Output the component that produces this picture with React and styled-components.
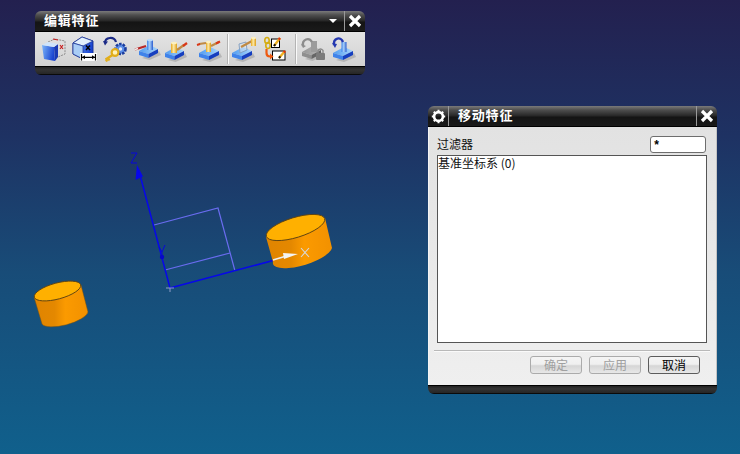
import React from "react";
import styled, { createGlobalStyle } from "styled-components";

const Global = createGlobalStyle`
  html, body { margin: 0; padding: 0; width: 740px; height: 454px; overflow: hidden; }
  body { font-family: "Noto Sans CJK SC", "Liberation Sans", sans-serif; }
`;

const Viewport = styled.div`
  position: relative;
  width: 740px;
  height: 454px;
  overflow: hidden;
  background: linear-gradient(180deg, #23204f 0%, #1e3263 30%, #184c78 60%, #10608c 100%);
`;

const Scene = styled.svg`
  position: absolute;
  inset: 0;
`;

const Window = styled.section`
  position: absolute;
  left: ${(p) => p.$x}px;
  top: ${(p) => p.$y}px;
  width: ${(p) => p.$w}px;
  height: ${(p) => p.$h}px;
  display: flex;
  flex-direction: column;
  border-radius: 6px;
  overflow: hidden;
`;

const TitleBar = styled.header`
  flex: 0 0 20px;
  height: 20px;
  display: flex;
  align-items: stretch;
  background: linear-gradient(180deg, #7a7a7a 0%, #4e4e4e 20%, #262626 50%, #141414 55%, #1a1a1a 100%);
  border-bottom: 1px solid #000;
  box-sizing: content-box;
  color: #fff;
`;

const TitleText = styled.h1`
  flex: 1;
  margin: 0;
  font-size: 13px;
  font-weight: 700;
  line-height: 18px;
  letter-spacing: 0.8px;
  padding-left: ${(p) => p.$pad}px;
  white-space: nowrap;
`;

const Menu = styled.span`
  width: 0;
  height: 0;
  align-self: center;
  margin-right: 7px;
  border-left: 4px solid transparent;
  border-right: 4px solid transparent;
  border-top: 4px solid #fff;
`;

const TitleCell = styled.span`
  flex: 0 0 ${(p) => p.$w}px;
  display: flex;
  align-items: center;
  justify-content: center;
  border-left: ${(p) => (p.$left ? "1px solid #9a9a9a" : "none")};
  border-right: ${(p) => (p.$right ? "1px solid #9a9a9a" : "none")};
`;

const FootBar = styled.footer`
  flex: 1;
  background: linear-gradient(180deg, #222 0%, #333 40%, #262626 100%);
  border-top: 1px solid #000;
  border-bottom: 1px solid #0a0a0a;
`;

const ToolRow = styled.div`
  flex: 0 0 34px;
  box-sizing: border-box;
  display: flex;
  align-items: center;
  gap: 7px;
  padding: 0 0 1px 6px;
  background: linear-gradient(180deg, #e4e4e4, #d2d2d2);
`;

const ToolIcon = styled.svg`
  flex: 0 0 24px;
  width: 24px;
  height: 26px;
  overflow: visible;
`;

const ToolSep = styled.i`
  flex: 0 0 2px;
  height: 30px;
  margin-right: -3px;
  background: linear-gradient(90deg, #b4b4b4 50%, #fafafa 50%);
`;

const DialogBody = styled.div`
  flex: 0 0 258px;
  box-sizing: border-box;
  display: flex;
  flex-direction: column;
  padding: 9px 9px 0 8px;
  background: linear-gradient(180deg, #e2e2e2, #efefef);
  border-left: 1px solid #f4f4f4;
  border-right: 1px solid #c4c4c4;
`;

const FilterRow = styled.div`
  display: flex;
  align-items: center;
  justify-content: space-between;
  height: 16px;
`;

const Label = styled.label`
  font-size: 12px;
  line-height: 14px;
  color: #111;
`;

const FilterInput = styled.input`
  box-sizing: border-box;
  width: 56px;
  height: 17px;
  margin-right: 1px;
  padding: 3px 2px 0;
  border: 1px solid #6e6e6e;
  border-radius: 3px;
  background: #fff;
  font: 700 12px "Liberation Mono", monospace;
  color: #000;
  outline: none;
`;

const ListBox = styled.div`
  box-sizing: border-box;
  height: 188px;
  margin-top: 3px;
  border: 1px solid #555;
  background: #fff;
  font-size: 12px;
  line-height: 13px;
  color: #111;
`;

const Rule = styled.hr`
  margin: 7px -3px 0 -3px;
  border: 0;
  height: 1px;
  background: #b9b9b9;
  box-shadow: 0 1px 0 #fafafa;
`;

const Buttons = styled.div`
  display: flex;
  justify-content: flex-end;
  gap: 7px;
  margin-top: 5px;
  padding-right: 7px;
`;

const Button = styled.button`
  box-sizing: border-box;
  width: 52px;
  height: 18px;
  padding: 0;
  border: 1px solid ${(p) => (p.disabled ? "#ababab" : "#5c5c5c")};
  border-radius: 3px;
  background: linear-gradient(180deg, #f4f4f4 0%, #f0f0f0 45%, #d6d6d6 55%, #e8e8e8 100%);
  font: 12px/16px "Noto Sans CJK SC", sans-serif;
  color: ${(p) => (p.disabled ? "#a0a0a0" : "#000")};
`;

const Close = () => (
  <svg width="14" height="14" viewBox="0 0 14 14">
    <path d="M2 2 12 12M12 2 2 12" stroke="#fff" strokeWidth="3.2" />
  </svg>
);

const Gear = () => (
  <svg width="15" height="15" viewBox="0 0 15 15">
    <circle cx="7.5" cy="7.5" r="4.4" fill="none" stroke="#fff" strokeWidth="2.6" />
    <path d="M7.5 0.8V3M7.5 12V14.2M0.8 7.5H3M12 7.5H14.2M2.8 2.8 4.3 4.3M10.7 10.7 12.2 12.2M12.2 2.8 10.7 4.3M4.3 10.7 2.8 12.2" stroke="#fff" strokeWidth="2" />
  </svg>
);

/* blue (or disabled grey) base block shared by the feature icons */
const Slab = ({ x = 0, y = 14, w = 19, grey }) => {
  const m = x + w * 0.5;
  const r = x + w;
  return (
    <g>
      <path d={`M${x + 3} ${y + 11} L${m + 1} ${y + 13} L${r + 3} ${y + 8} L${r + 1} ${y + 4}Z`} fill="#9a9a9a" opacity="0.55" />
      <path d={`M${x} ${y + 4} L${m + 1} ${y - 2} L${r} ${y + 2} L${m} ${y + 7}Z`} fill={grey ? "url(#greyTop)" : "url(#slabTop)"} />
      <path d={`M${x} ${y + 4} L${m} ${y + 7} V${y + 11} L${x} ${y + 8}Z`} fill={grey ? "#8e8e8e" : "#3f83ea"} />
      <path d={`M${m} ${y + 7} L${r} ${y + 2} V${y + 6} L${m} ${y + 11}Z`} fill={grey ? "#666" : "#163fc0"} />
    </g>
  );
};

const Cyl = ({ x, y, h = 8, w = 6 }) => (
  <g>
    <rect x={x} y={y} width={w} height={h} fill="url(#gold)" />
    <ellipse cx={x + w / 2} cy={y} rx={w / 2} ry="1.3" fill="#fdf0c0" />
  </g>
);

const Pencil = ({ x1, y1, x2, y2 }) => (
  <g>
    <path d={`M${x1} ${y1} L${x2} ${y2}`} stroke="#f0b020" strokeWidth="2.4" />
    <path d={`M${x1} ${y1} L${x1 + (x2 - x1) * 0.22} ${y1 + (y2 - y1) * 0.22}`} stroke="#111" strokeWidth="2" />
    <path d={`M${x2} ${y2} L${x2 - (x2 - x1) * 0.2} ${y2 - (y2 - y1) * 0.2}`} stroke="#e03010" strokeWidth="2.4" />
  </g>
);

const Icons = [
  <>
    <path d="M7 6 14 3 24 5 24 18 17 21" fill="none" stroke="#8d8d8d" strokeWidth="1" strokeDasharray="2 1" />
    <path d="M12 3 17 4M19 9 22 13M22 9 19 13" stroke="#c82020" strokeWidth="1.2" fill="none" />
    <path d="M1 9 13 11 14 25 3 23Z" fill="url(#cube)" />
    <path d="M13 11 17 8 17 21 14 25Z" fill="#1a3ab4" />
    <path d="M1 9 7 6 17 8 13 11Z" fill="#cfe4fb" />
  </>,
  <>
    <path d="M1 7 10 1 21 5 21 17 11 23 1 18Z" fill="url(#cube)" stroke="#142c90" strokeWidth="0.9" />
    <path d="M1 7 10 1 21 5 11 10Z" fill="#e2f0fc" stroke="#142c90" strokeWidth="0.7" />
    <path d="M1 7 11 10 11 23 1 18Z" fill="#a9cdf6" stroke="#142c90" strokeWidth="0.7" />
    <path d="M14 9.5 18 14M18 9.5 14 14" stroke="#000" strokeWidth="1.5" />
    <rect x="8" y="17" width="17" height="8" fill="#fff" />
    <path d="M9.5 18V24.5M23.5 18V24.5M10 21.3H23" stroke="#000" strokeWidth="1.2" />
    <path d="M10 21.3 13 19.3V23.3ZM23 21.3 20 19.3V23.3Z" fill="#000" />
  </>,
  <>
    <circle cx="17.5" cy="13" r="5" fill="#5b8ee6" stroke="#1d3e9e" strokeWidth="2.6" strokeDasharray="2.4 1.2" />
    <circle cx="17.5" cy="13" r="1.7" fill="#e4ecfa" />
    <path d="M2 7C2 1 11 0 13 6" fill="none" stroke="#1b2a86" strokeWidth="2.2" />
    <path d="M2 9.5 0 5 5 5.5Z" fill="#1b2a86" />
    <circle cx="12" cy="16.5" r="3.4" fill="#fff2b8" stroke="#e2ae1a" strokeWidth="2.2" />
    <path d="M9.5 19 2.5 23.5M5 22 6.5 24.5M3 23.5 4.2 25.5" stroke="#e2ae1a" strokeWidth="2.4" fill="none" />
  </>,
  <>
    <Slab x={5} y={11} w={19} />
    <rect x="13" y="4" width="6" height="10" fill="url(#pillar)" />
    <ellipse cx="16" cy="4" rx="3" ry="1.2" fill="#bcdcfb" />
    <path d="M1 13.5 12 10" stroke="#b82828" strokeWidth="2.2" />
    <path d="M1 13.5 4 12.5" stroke="#f4f4f4" strokeWidth="1.6" />
  </>,
  <>
    <Slab x={0} y={13} w={19} />
    <Cyl x={6} y={7} h={10} />
    <path d="M12 14 19 9" stroke="#c08a44" strokeWidth="2.2" />
    <path d="M18 10 22 7" stroke="#d83818" strokeWidth="2.2" />
  </>,
  <>
    <Slab x={3} y={13} w={20} />
    <Cyl x={10} y={6} h={10} w={5} />
    <path d="M3 8 10 7M15 10 23 6" stroke="#c08a44" strokeWidth="2.2" />
    <path d="M1 9 4 8M20 7.5 24 5.5" stroke="#d83818" strokeWidth="2" />
  </>,
  <>
    <Slab x={-1} y={13} w={20} />
    <path d="M6 8 13 6 14 14 7 17Z" fill="#dde8f2" fillOpacity="0.5" stroke="#7f9cc0" strokeWidth="0.9" />
    <path d="M8 11 19 5" stroke="#c08a44" strokeWidth="2.2" />
    <Cyl x={18} y={2} h={8} w={5} />
  </>,
  <>
    <rect x="7.5" y="3" width="8" height="8.5" fill="#fff" stroke="#000" />
    <rect x="8.5" y="15" width="12.5" height="9" fill="#fff" stroke="#000" />
    <Pencil x1={10} y1={10} x2={16} y2={2} />
    <Pencil x1={15} y1={22} x2={21} y2={15} />
    <ellipse cx="3" cy="4.5" rx="2.2" ry="3" fill="none" stroke="#d4ac10" strokeWidth="1.6" />
    <ellipse cx="4" cy="9.5" rx="2.2" ry="3" fill="none" stroke="#d4ac10" strokeWidth="1.6" />
    <path d="M2.5 13V17Q2.5 20.5 6 20.5H7" fill="none" stroke="#ee5a10" strokeWidth="2.2" />
    <path d="M6 17.5 9.5 20.5 6 23.5Z" fill="#ee5a10" />
  </>,
  <>
    <Slab x={1} y={12} w={19} grey />
    <rect x="10" y="5" width="6" height="11" fill="#9c9c9c" />
    <path d="M2 10C1 3 8 1 11 6" fill="none" stroke="#8c8c8c" strokeWidth="2.4" />
    <path d="M0 8 5 10 2 12Z" fill="#8c8c8c" />
    <rect x="15" y="17" width="9" height="7" rx="1" fill="#7b7b7b" />
    <path d="M17 17V14.5Q19.5 11.5 22 14.5V17" fill="none" stroke="#8a8a8a" strokeWidth="1.4" />
  </>,
  <>
    <Slab x={1} y={13} w={20} />
    <rect x="9.5" y="6" width="5" height="10" fill="url(#pillar)" />
    <path d="M2 9C1 2 9 0 11 6" fill="none" stroke="#2438b0" strokeWidth="2.4" />
    <path d="M0 7 5 8 3 12Z" fill="#2438b0" />
  </>,
];

const App = () => {
  const first = Icons.slice(0, 6);
  return (
    <Viewport>
      <Global />
      <Scene width="740" height="454" viewBox="0 0 740 454">
        <defs>
          <linearGradient id="side" x1="0" x2="1" y1="0" y2="0">
            <stop offset="0" stopColor="#e08400" />
            <stop offset="0.38" stopColor="#e48800" />
            <stop offset="0.58" stopColor="#fb9a00" />
            <stop offset="1" stopColor="#f29100" />
          </linearGradient>
          <linearGradient id="cube" x1="0" x2="1" y1="0" y2="0.3">
            <stop offset="0" stopColor="#7ab4fa" />
            <stop offset="1" stopColor="#1a44d0" />
          </linearGradient>
          <linearGradient id="slabTop" x1="0" x2="1" y1="0" y2="0">
            <stop offset="0" stopColor="#4e9af0" />
            <stop offset="1" stopColor="#a8d6fc" />
          </linearGradient>
          <linearGradient id="greyTop" x1="0" x2="1" y1="0" y2="0">
            <stop offset="0" stopColor="#959595" />
            <stop offset="1" stopColor="#b8b8b8" />
          </linearGradient>
          <linearGradient id="gold" x1="0" x2="1" y1="0" y2="0">
            <stop offset="0" stopColor="#e6a820" />
            <stop offset="0.45" stopColor="#fdeaa8" />
            <stop offset="1" stopColor="#dc9c18" />
          </linearGradient>
          <linearGradient id="pillar" x1="0" x2="1" y1="0" y2="0">
            <stop offset="0" stopColor="#3f83ea" />
            <stop offset="0.45" stopColor="#a8d0f8" />
            <stop offset="1" stopColor="#2a5cd0" />
          </linearGradient>
        </defs>
        <g fill="none">
          <path d="M154 225 218 208 235 271M165 270 230 253" stroke="#6a6cf0" strokeWidth="1.2" />
          <path d="M170 288 140 175" stroke="#0707ea" strokeWidth="1.5" />
          <path d="M170 288 275 260" stroke="#0707ea" strokeWidth="1.5" />
          <path d="M137 165 135.5 180 143 176.5Z" fill="#0707ea" />
          <path d="M131 153H137L131 163H137M159 247 162 252 165 245M162 252V256" stroke="#0808d8" strokeWidth="1" />
          <circle cx="162" cy="257" r="2.2" fill="#0808c8" />
          <path d="M166 288H174M170 288V292" stroke="#8f9cc8" strokeWidth="1" />
        </g>
        <path d="M266 237 273 262A30.5 10 -17 0 0 332 248L325 218Z" fill="url(#side)" />
        <ellipse cx="295.5" cy="227.5" rx="30.5" ry="10" transform="rotate(-17 295.5 227.5)" fill="#ffb000" stroke="#5f4412" strokeWidth="0.9" />
        <path d="M273 260 288 255.5" stroke="#eee" strokeWidth="1.5" />
        <path d="M298 254 283 253 284 259Z" fill="#f4f4f4" />
        <path d="M301 248 309 257M309 248 301 257" stroke="#d8d8d8" strokeWidth="1.1" fill="none" />
        <path d="M34 297 42 324A24 8 -15 0 0 88 312L81 285Z" fill="url(#side)" stroke="#7a5210" strokeWidth="0.5" />
        <ellipse cx="57.5" cy="291" rx="24" ry="8" transform="rotate(-15 57.5 291)" fill="#ffb000" stroke="#5f4412" strokeWidth="0.9" />
      </Scene>

      <Window $x={35} $y={11} $w={330} $h={64}>
        <TitleBar>
          <TitleText $pad={9}>编辑特征</TitleText>
          <Menu />
          <TitleCell $w={20} $left>
            <Close />
          </TitleCell>
        </TitleBar>
        <ToolRow>
          {first.map((icon, i) => (
            <ToolIcon key={i} viewBox="0 0 24 26">{icon}</ToolIcon>
          ))}
          <ToolSep />
          <ToolIcon viewBox="0 0 24 26">{Icons[6]}</ToolIcon>
          <ToolIcon viewBox="0 0 24 26">{Icons[7]}</ToolIcon>
          <ToolSep />
          <ToolIcon viewBox="0 0 24 26">{Icons[8]}</ToolIcon>
          <ToolIcon viewBox="0 0 24 26">{Icons[9]}</ToolIcon>
        </ToolRow>
        <FootBar />
      </Window>

      <Window $x={428} $y={106} $w={289} $h={288}>
        <TitleBar>
          <TitleCell $w={20} $right>
            <Gear />
          </TitleCell>
          <TitleText $pad={9}>移动特征</TitleText>
          <TitleCell $w={20} $left>
            <Close />
          </TitleCell>
        </TitleBar>
        <DialogBody>
          <FilterRow>
            <Label>过滤器</Label>
            <FilterInput defaultValue="*" readOnly />
          </FilterRow>
          <ListBox>基准坐标系 (0)</ListBox>
          <Rule />
          <Buttons>
            <Button disabled>确定</Button>
            <Button disabled>应用</Button>
            <Button>取消</Button>
          </Buttons>
        </DialogBody>
        <FootBar />
      </Window>
    </Viewport>
  );
};

export default App;
